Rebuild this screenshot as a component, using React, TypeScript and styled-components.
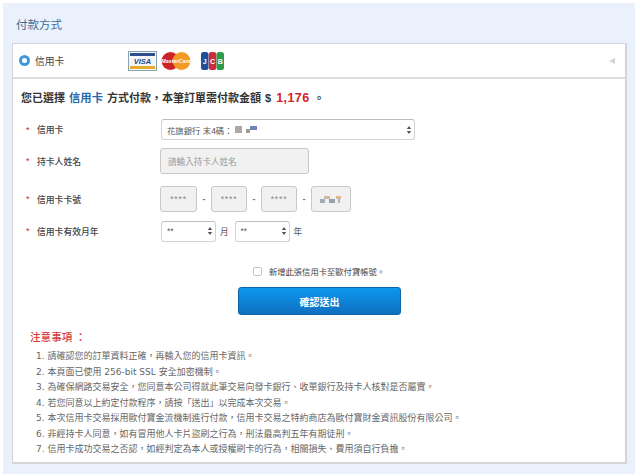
import styled, { createGlobalStyle } from 'styled-components';

const FONT = '"Liberation Sans", "Noto Sans CJK TC", sans-serif';

const GlobalStyle = createGlobalStyle`
  html, body {
    margin: 0;
    padding: 0;
    background: #fff;
    font-family: ${FONT};
  }
  * {
    box-sizing: border-box;
  }
`;

const Panel = styled.section`
  width: 632px;
  height: 471px;
  margin: 3px 0 0 3px;
  padding: 0 8px 0 9px;
  background: #eaf1fc;
`;

const Title = styled.h2`
  height: 40px;
  margin: 0;
  padding: 14px 0 0 4px;
  font-size: 11.5px;
  line-height: 16px;
  font-weight: 400;
  color: #3f6d96;
`;

const Card = styled.div`
  height: 421px;
  background: #fff;
  border: 1px solid #d3d6d9;
  border-width: 1px 2px 2px 1px;
`;

const MethodBar = styled.div`
  display: flex;
  align-items: center;
  height: 35px;
  padding: 0 10px 0 6px;
  border-bottom: 2px solid #dcdedf;
`;

const Radio = styled.span`
  width: 11px;
  height: 11px;
  border: 3px solid #3f97dc;
  border-radius: 50%;
  background: #fff;
  margin-right: 5px;
`;

const MethodName = styled.span`
  width: 93px;
  font-size: 9.8px;
  color: #444;
`;

const Logos = styled.div`
  display: flex;
  align-items: center;
  flex: 1;
  gap: 4px;
`;

const JcbMark = styled.svg`
  margin-left: 6px;
`;

const Collapse = styled.span`
  width: 0;
  height: 0;
  border-style: solid;
  border-width: 3.5px 6px 3.5px 0;
  border-color: transparent #d0d3d6 transparent transparent;
`;

const Summary = styled.p`
  height: 16px;
  margin: 11px 0 0 8px;
  font-size: 11px;
  line-height: 16px;
  font-weight: 700;
  word-spacing: 1px;
  color: #333;
  white-space: nowrap;
`;

const Method = styled.span`
  color: #2a6aa8;
  font-size: 11.3px;
`;

const Amount = styled.span`
  margin-left: 1px;
  color: #d2232a;
  font-size: 12.5px;
  letter-spacing: 0.4px;
`;

const Form = styled.div`
  display: flex;
  flex-direction: column;
  margin-top: 11px;
`;

const Row = styled.div<{ $height: number }>`
  display: flex;
  align-items: center;
  height: ${({ $height }) => $height}px;
`;

const Label = styled.label`
  display: flex;
  align-items: center;
  width: 147px;
  padding-left: 13px;
  font-size: 8.8px;
  color: #444;
  font-weight: 500;
`;

const Star = styled.span`
  width: 11px;
  color: #d2232a;
  font-size: 9px;
`;

const SelectBox = styled.div<{ $width: number }>`
  display: flex;
  align-items: center;
  justify-content: space-between;
  width: ${({ $width }) => $width}px;
  height: 21px;
  margin-left: 1px;
  padding: 0 2px 0 5px;
  background: #fff;
  border: 1px solid #d2d2d2;
  border-top-color: #bdbdbd;
  border-radius: 3px;
  font-size: 8.4px;
  color: #555;
`;

const SelectValue = styled.span`
  display: flex;
  align-items: center;
  gap: 2px;
`;

const Chevrons = styled.svg`
  flex: none;
`;

const Field = styled.div<{ $width: number; $height: number }>`
  display: flex;
  align-items: center;
  justify-content: ${({ $width }) => ($width > 60 ? 'flex-start' : 'center')};
  width: ${({ $width }) => $width}px;
  height: ${({ $height }) => $height}px;
  padding: 0 7px;
  background: #f1f1f1;
  border: 1px solid #c8c8c8;
  border-radius: 3px;
  font-size: 8.6px;
  color: #9a9a9a;
`;

const Stars = styled.span`
  letter-spacing: 0.8px;
  color: #888;
`;

const NumberGroup = styled.div`
  display: flex;
  align-items: center;
`;

const Dash = styled.span`
  width: 14px;
  text-align: center;
  font-size: 9px;
  font-weight: 700;
  color: #777;
`;

const Unit = styled.span`
  margin: 0 5px 0 4px;
  font-size: 8.6px;
  color: #555;
`;

const Mask = styled.svg`
  display: block;
`;

const SaveRow = styled.div`
  display: flex;
  align-items: center;
  justify-content: center;
  height: 16px;
  margin-top: 19px;
  font-size: 8.3px;
  color: #444;
`;

const Check = styled.span`
  width: 9px;
  height: 9px;
  margin-right: 7px;
  border: 1px solid #c6c6c6;
  border-radius: 2px;
  background: #fff;
`;

const Submit = styled.button`
  display: block;
  width: 163px;
  height: 28px;
  margin: 8px 0 0 225px;
  border: 1px solid #0d64a8;
  border-radius: 3px;
  background: linear-gradient(#0c98ee, #0f6fc0);
  color: #fff;
  font-family: ${FONT};
  font-size: 10px;
  font-weight: 700;
`;

const Notice = styled.div`
  margin: 14px 0 0 17px;
`;

const NoticeTitle = styled.h3`
  margin: 0;
  font-size: 10.6px;
  line-height: 16px;
  font-weight: 500;
  color: #d93a3a;
`;

const NoticeList = styled.ol`
  margin: 4px 0 0;
  padding: 0 0 0 6px;
  list-style: none;
`;

const NoticeItem = styled.li`
  font-family: "DejaVu Sans", "Noto Sans CJK TC", sans-serif;
  font-size: 9px;
  line-height: 15.5px;
  color: #666;
  white-space: nowrap;
`;

const notes = [
  '1. 請確認您的訂單資料正確，再輸入您的信用卡資訊。',
  '2. 本頁面已使用 256-bit SSL 安全加密機制。',
  '3. 為確保網路交易安全，您同意本公司得就此筆交易向發卡銀行、收單銀行及持卡人核對是否屬實。',
  '4. 若您同意以上約定付款程序，請按「送出」以完成本次交易。',
  '5. 本次信用卡交易採用歐付寶金流機制進行付款，信用卡交易之特約商店為歐付寶財金資訊股份有限公司。',
  '6. 非經持卡人同意，如有冒用他人卡片盜刷之行為，刑法最高判五年有期徒刑。',
  '7. 信用卡成功交易之否認，如經判定為本人或授權刷卡的行為，相關損失、費用須自行負擔。',
];

const Arrows = () => (
  <Chevrons width="6" height="10" viewBox="0 0 6 10">
    <path d="M3 1 5.2 4H.8z M3 9 .8 6h4.4z" fill="#555" />
  </Chevrons>
);

const VisaLogo = () => (
  <svg width="29" height="20" viewBox="0 0 29 20">
    <rect x=".5" y=".5" width="28" height="19" fill="#f4f7fa" stroke="#8ba0b0" />
    <rect x="2" y="2" width="25" height="3" fill="#2b4f8f" />
    <rect x="2" y="15" width="25" height="3" fill="#e8a92c" />
    <text x="14.5" y="13" textAnchor="middle" fontFamily="Liberation Sans" fontSize="7.5" fontWeight="700" fontStyle="italic" fill="#27467f">VISA</text>
  </svg>
);

const MasterLogo = () => (
  <svg width="30" height="20" viewBox="0 0 30 20">
    <circle cx="9.5" cy="10" r="9" fill="#cc2229" />
    <circle cx="20.5" cy="10" r="9" fill="#f39a25" />
    <text x="15" y="12" textAnchor="middle" fontFamily="Liberation Sans" fontSize="5.4" fontWeight="700" fontStyle="italic" fill="#fff">MasterCard</text>
  </svg>
);

const JcbLogo = () => (
  <JcbMark width="23" height="18" viewBox="0 0 23 18">
    <rect x="0" y="0" width="7.5" height="18" rx="2.5" fill="#1d4f9c" />
    <rect x="7.8" y="0" width="7.5" height="18" rx="2.5" fill="#cf2a3a" />
    <rect x="15.5" y="0" width="7.5" height="18" rx="2.5" fill="#2f9a4a" />
    <text x="3.8" y="12" textAnchor="middle" fontFamily="Liberation Sans" fontSize="7" fontWeight="700" fill="#fff">J</text>
    <text x="11.5" y="12" textAnchor="middle" fontFamily="Liberation Sans" fontSize="7" fontWeight="700" fill="#fff">C</text>
    <text x="19.2" y="12" textAnchor="middle" fontFamily="Liberation Sans" fontSize="7" fontWeight="700" fill="#fff">B</text>
  </JcbMark>
);

// blurred-out digits in the source image
const BankMask = () => (
  <Mask width="22" height="8" viewBox="0 0 22 8">
    <rect x="0" y="0" width="7" height="7" fill="#9c9488" opacity=".8" />
    <rect x="11" y="3" width="4" height="4" fill="#8a8078" opacity=".8" />
    <rect x="15" y="0" width="7" height="4" fill="#5d78b4" opacity=".9" />
  </Mask>
);

const NumberMask = () => (
  <Mask width="22" height="7" viewBox="0 0 22 7">
    <rect x="0" y="3" width="5" height="4" fill="#8f9aa8" opacity=".8" />
    <rect x="4" y="0" width="6" height="3" fill="#c9b49a" opacity=".9" />
    <rect x="9" y="3" width="6" height="4" fill="#7f8fa0" opacity=".8" />
    <rect x="16" y="0" width="5" height="3" fill="#d6b48a" opacity=".9" />
    <rect x="18" y="3" width="2" height="4" fill="#8fa6c4" opacity=".8" />
  </Mask>
);

export default function App() {
  return (
    <>
      <GlobalStyle />
      <Panel>
        <Title>付款方式</Title>
        <Card>
          <MethodBar>
            <Radio />
            <MethodName>信用卡</MethodName>
            <Logos>
              <VisaLogo />
              <MasterLogo />
              <JcbLogo />
            </Logos>
            <Collapse />
          </MethodBar>
          <Summary>
            您已選擇 <Method>信用卡</Method> 方式付款，本筆訂單需付款金額 $ <Amount>1,176</Amount> 。
          </Summary>
          <Form>
            <Row $height={25}>
              <Label><Star>*</Star>信用卡</Label>
              <SelectBox $width={254}>
                <SelectValue>花旗銀行 末4碼： <BankMask /></SelectValue>
                <Arrows />
              </SelectBox>
            </Row>
            <Row $height={38}>
              <Label><Star>*</Star>持卡人姓名</Label>
              <Field $width={149} $height={26}>請輸入持卡人姓名</Field>
            </Row>
            <Row $height={38}>
              <Label><Star>*</Star>信用卡卡號</Label>
              <NumberGroup>
                <Field $width={37} $height={26}><Stars>****</Stars></Field>
                <Dash>-</Dash>
                <Field $width={36} $height={26}><Stars>****</Stars></Field>
                <Dash>-</Dash>
                <Field $width={36} $height={26}><Stars>****</Stars></Field>
                <Dash>-</Dash>
                <Field $width={40} $height={26}><NumberMask /></Field>
              </NumberGroup>
            </Row>
            <Row $height={26}>
              <Label><Star>*</Star>信用卡有效月年</Label>
              <SelectBox $width={55}>
                **
                <Arrows />
              </SelectBox>
              <Unit>月</Unit>
              <SelectBox $width={55}>
                **
                <Arrows />
              </SelectBox>
              <Unit>年</Unit>
            </Row>
          </Form>
          <SaveRow>
            <Check />
            新增此張信用卡至歐付寶帳號。
          </SaveRow>
          <Submit>確認送出</Submit>
          <Notice>
            <NoticeTitle>注意事項 ：</NoticeTitle>
            <NoticeList>
              {notes.map((note) => (
                <NoticeItem key={note}>{note}</NoticeItem>
              ))}
            </NoticeList>
          </Notice>
        </Card>
      </Panel>
    </>
  );
}
